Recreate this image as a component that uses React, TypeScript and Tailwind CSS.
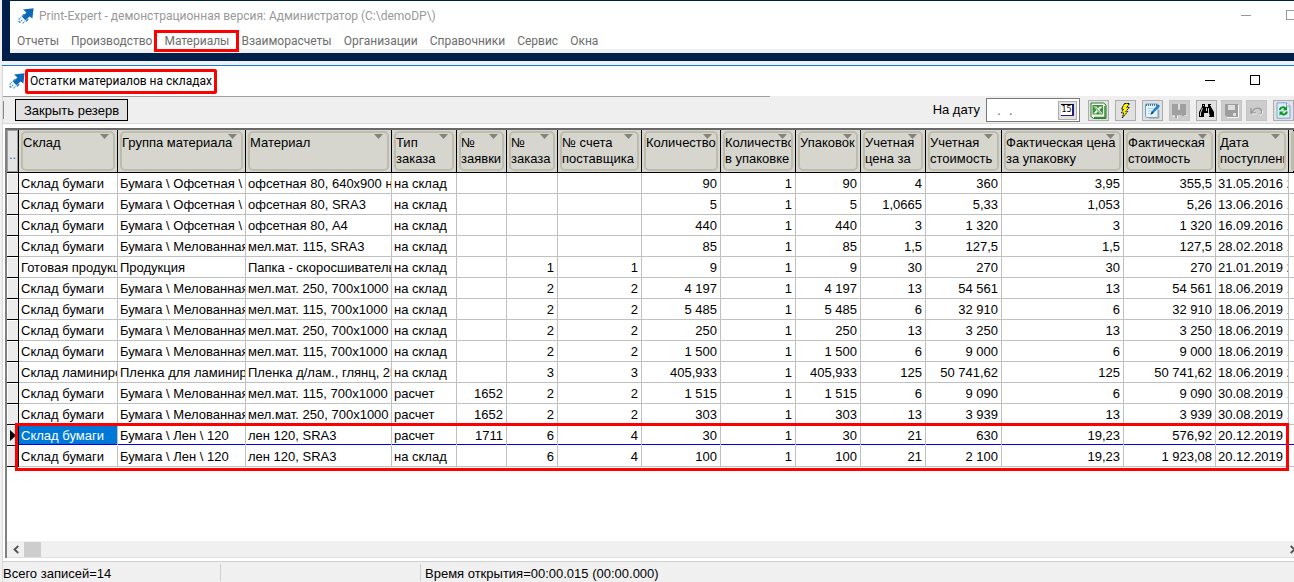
import type { ReactNode } from "react";

type Column = { title: string; second?: string; width: string; align: "left" | "right" };

const columns: Column[] = [
  { title: "Склад", width: "w-[99px]", align: "left" },
  { title: "Группа материала", width: "w-[128px]", align: "left" },
  { title: "Материал", width: "w-[146px]", align: "left" },
  { title: "Тип", second: "заказа", width: "w-[65px]", align: "left" },
  { title: "№", second: "заявки", width: "w-[50px]", align: "right" },
  { title: "№", second: "заказа", width: "w-[51px]", align: "right" },
  { title: "№ счета", second: "поставщика", width: "w-[84px]", align: "right" },
  { title: "Количество", width: "w-[79px]", align: "right" },
  { title: "Количество", second: "в упаковке", width: "w-[75px]", align: "right" },
  { title: "Упаковок", width: "w-[65px]", align: "right" },
  { title: "Учетная", second: "цена за", width: "w-[65px]", align: "right" },
  { title: "Учетная", second: "стоимость", width: "w-[76px]", align: "right" },
  { title: "Фактическая цена", second: "за упаковку", width: "w-[122px]", align: "right" },
  { title: "Фактическая", second: "стоимость", width: "w-[92px]", align: "right" },
  { title: "Дата", second: "поступления", width: "w-[73px]", align: "left" },
];

const rows: string[][] = [
  ["Склад бумаги", "Бумага \\ Офсетная \\", "офсетная 80, 640x900 на", "на склад", "", "", "", "90", "1", "90", "4", "360", "3,95", "355,5", "31.05.2016 2"],
  ["Склад бумаги", "Бумага \\ Офсетная \\", "офсетная 80, SRA3", "на склад", "", "", "", "5", "1", "5", "1,0665", "5,33", "1,053", "5,26", "13.06.2016 1"],
  ["Склад бумаги", "Бумага \\ Офсетная \\", "офсетная 80, A4", "на склад", "", "", "", "440", "1", "440", "3", "1 320", "3", "1 320", "16.09.2016 1"],
  ["Склад бумаги", "Бумага \\ Мелованная", "мел.мат. 115, SRA3", "на склад", "", "", "", "85", "1", "85", "1,5", "127,5", "1,5", "127,5", "28.02.2018 1"],
  ["Готовая продукция", "Продукция", "Папка - скоросшиватель", "на склад", "", "1", "1", "9", "1", "9", "30", "270", "30", "270", "21.01.2019 2"],
  ["Склад бумаги", "Бумага \\ Мелованная", "мел.мат. 250, 700x1000", "на склад", "", "2", "2", "4 197", "1", "4 197", "13", "54 561", "13", "54 561", "18.06.2019 1"],
  ["Склад бумаги", "Бумага \\ Мелованная", "мел.мат. 115, 700x1000", "на склад", "", "2", "2", "5 485", "1", "5 485", "6", "32 910", "6", "32 910", "18.06.2019 1"],
  ["Склад бумаги", "Бумага \\ Мелованная", "мел.мат. 250, 700x1000", "на склад", "", "2", "2", "250", "1", "250", "13", "3 250", "13", "3 250", "18.06.2019 1"],
  ["Склад бумаги", "Бумага \\ Мелованная", "мел.мат. 115, 700x1000", "на склад", "", "2", "2", "1 500", "1", "1 500", "6", "9 000", "6", "9 000", "18.06.2019 1"],
  ["Склад ламинирования", "Пленка для ламинирования", "Пленка д/лам., глянц, 25", "на склад", "", "3", "3", "405,933", "1", "405,933", "125", "50 741,62", "125", "50 741,62", "18.06.2019 2"],
  ["Склад бумаги", "Бумага \\ Мелованная", "мел.мат. 115, 700x1000", "расчет", "1652", "2", "2", "1 515", "1", "1 515", "6", "9 090", "6", "9 090", "30.08.2019 1"],
  ["Склад бумаги", "Бумага \\ Мелованная", "мел.мат. 250, 700x1000", "расчет", "1652", "2", "2", "303", "1", "303", "13", "3 939", "13", "3 939", "30.08.2019 1"],
  ["Склад бумаги", "Бумага \\ Лен \\ 120", "лен 120, SRA3", "расчет", "1711", "6", "4", "30", "1", "30", "21", "630", "19,23", "576,92", "20.12.2019"],
  ["Склад бумаги", "Бумага \\ Лен \\ 120", "лен 120, SRA3", "на склад", "", "6", "4", "100", "1", "100", "21", "2 100", "19,23", "1 923,08", "20.12.2019"],
];

const SELECTED = 12;

const menu = ["Отчеты", "Производство", "Материалы", "Взаиморасчеты", "Организации", "Справочники", "Сервис", "Окна"];

function RocketLogo() {
  return (
    <svg width="16" height="16" viewBox="0 0 16 16" className="shrink-0" aria-hidden="true">
      <path d="M5 1.5 15.6.2 14.4 10.6 11.6 8.4 7.4 12.2 4.2 9 8.4 4.6Z" fill="#0b69b7" />
      <path d="M3.4 8.2 6 5.6 7 6.8 4.4 9.3ZM7.4 12.8 10 10.3 10.6 11.8 8.2 14Z" fill="#2f80c4" />
      <path d="M.6 11.6 3 9.4M1.4 14.8 4.6 11.4M4.6 15.4 6.6 13.2M.4 14 2 12.4" stroke="#4d94cf" strokeWidth="1.3" strokeDasharray="1.6 .8" />
    </svg>
  );
}

function MinimizeGlyph() {
  return (
    <svg width="11" height="11" viewBox="0 0 11 11" aria-hidden="true">
      <path d="M0 5.500h10" stroke="currentColor" shapeRendering="crispEdges" />
    </svg>
  );
}

function MaximizeGlyph() {
  return (
    <svg width="11" height="11" viewBox="0 0 11 11" aria-hidden="true">
      <rect x=".5" y=".5" width="9" height="9" fill="none" stroke="currentColor" shapeRendering="crispEdges" />
    </svg>
  );
}

function ToolButton({ label, disabled, children }: { label: string; disabled?: boolean; children: ReactNode }) {
  return (
    <button
      type="button"
      aria-label={label}
      disabled={disabled}
      className="flex size-[21px] shrink-0 items-center justify-center border border-[#adadad] bg-[#e1e1e1] disabled:border-[#c4c4c4] disabled:bg-[#cccccc]"
    >
      <svg width="17" height="17" viewBox="0 0 17 17" aria-hidden="true">
        {children}
      </svg>
    </button>
  );
}

function Toolbar() {
  return (
    <div className="flex h-[27px] items-center border-b border-[#d9d9d9] bg-[#efefef]">
      <span className="h-[18px] w-px bg-[#8a8a8a]" />
      <button type="button" className="ml-[11px] h-[22px] shrink-0 border border-black bg-[#e1e1e1] px-2 pt-[2px] text-[13px] leading-4 text-black">
        Закрыть резерв
      </button>
      <div className="ml-auto flex items-center gap-2">
        <div className="flex items-center gap-[6px]">
          <label htmlFor="on-date" className="text-[13px] whitespace-nowrap text-black">
            На дату
          </label>
          <div className="flex h-6 w-[94px] items-center border border-[#7a7a7a] bg-white pr-[2px]">
            <input id="on-date" type="text" defaultValue=".  ." className="min-w-0 flex-1 bg-transparent pl-[10px] text-sm whitespace-pre text-[#4a7fa5] outline-none" />
            <button type="button" aria-label="Календарь" className="flex size-[19px] shrink-0 items-center justify-center border border-[#adadad] bg-[#e1e1e1]">
              <span className="flex h-3 w-[13px] items-center justify-center border-t border-r-2 border-b border-t-black border-r-[#20207a] border-b-[#20207a] bg-white font-['DejaVu_Sans'] text-[8px] leading-none text-black">
                15
              </span>
            </button>
          </div>
        </div>
        <div className="flex items-center gap-[6px]">
          <ToolButton label="Экспорт в Excel">
            <path d="M1 1h12.500L16 3v13.500H3.500L1 14.500Z" fill="#f3f9f1" stroke="#2d7a33" />
            <path d="M15 4v11.500H4" stroke="#3c8a3a" strokeWidth="1.500" fill="none" />
            <rect x="2.500" y="3" width="10.500" height="9.500" fill="#3f8f3f" />
            <path d="M3.500 4.500h3l1.500 2L9.700 4.500h2.800L9.400 8l3.300 3.500H9.600L7.900 9.300 6.200 11.500H3.300L6.500 8Z" fill="#e8f3e5" />
            <path d="M5 5.300 10.500 11" stroke="#2d7a33" strokeWidth=".8" />
          </ToolButton>
          <ToolButton label="Выполнить">
            <path d="M7.500 1.500h5L9.800 5.500h2.400L8.700 9.500h2L5.200 16l1.500-5H4.500l2-4h-2Z" fill="#fff200" stroke="#000" strokeWidth="1" strokeDasharray="2 .7" />
          </ToolButton>
          <ToolButton label="Изменить">
            <rect x="1.500" y="2" width="12.500" height="13.500" rx="1" fill="#e4f2fc" stroke="#6da3cc" />
            <path d="M2 3h12" stroke="#3c78a8" strokeWidth="2" strokeDasharray="1 1" />
            <path d="M4 6.500h7M4 9h5M4 11.500h3" stroke="#b9d5ea" />
            <path d="M14.800 8v8H5" stroke="#8f9aa3" fill="none" />
            <path d="m7 12 .8-2.600L14 2.500l2 1.500-6.500 7Z" fill="#1f78c4" />
            <path d="m6.500 13 1.300-3.600 1.700 1.600Z" fill="#333" />
          </ToolButton>
          <ToolButton label="Резерв" disabled>
            <path d="M1 2h6v6h2V2h6v11h-2v3h-2v-3H6v3H4v-3H1Z" fill="#a0a0a0" />
            <path d="M8 2v5M2 14.500h2M6.500 14v2.500M12 14v2.500M15.500 13v1" stroke="#f2f2f2" />
          </ToolButton>
          <div className="flex gap-1">
            <ToolButton label="Найти">
              <path d="M4 2h3v3h3V2h3v3l3 5v5h-5v-4H6v4H1v-5l3-5Z" fill="#000" />
              <path d="M4.500 6 2.500 11v3M10.500 6v5l1 3M8.500 6v3M5.500 3v1M12.500 3v1" stroke="#e8e8e8" strokeWidth=".9" fill="none" />
            </ToolButton>
            <ToolButton label="Сохранить" disabled>
              <path d="M2 2h13v13H4l-2-2Z" fill="#9d9d9d" />
              <path d="M5 3h7v5H5ZM10 11h3v3h-3Z" fill="#dedede" />
              <path d="M15.500 3v12.500H4" stroke="#f7f7f7" fill="none" />
            </ToolButton>
            <ToolButton label="Отменить" disabled>
              <path d="M3 6v5h5M3.500 10.500C6 6.500 9 5.500 11.500 6.500c2.500 1 3 4 1 5.500" stroke="#9b9b9b" strokeWidth="1.400" fill="none" />
              <path d="M4 12h4.500M12 13.500c2.500-1 3-3 2.500-5" stroke="#f2f2f2" fill="none" />
            </ToolButton>
          </div>
          <ToolButton label="Обновить">
            <path d="M2 .8h9.500L15 4v12.200H2Z" fill="#dcebfb" stroke="#7ca6d8" />
            <path d="M11.500.8V4H15" fill="#fff" stroke="#7ca6d8" />
            <path d="M5 8c0-3 4-3.500 5.500-1.600M11.700 9.500c0 3.300-4 3.800-5.700 1.700" stroke="#0a9a18" strokeWidth="2" fill="none" />
            <path d="M12 4v4.300H7.800ZM4.500 13.800V9.500h4.200Z" fill="#0a9a18" />
          </ToolButton>
        </div>
      </div>
    </div>
  );
}

function HeaderCell({ column }: { column?: Column }) {
  return (
    <th scope="col" className="h-[43px] border-r border-b border-black bg-[#d6d6ce] px-[2px] py-px text-left align-top font-normal">
      <div className="relative h-10 overflow-hidden rounded-[5px] border-2 border-[#bdbdae] pt-[2px] leading-4 whitespace-nowrap">
        {column && (
          <>
            <svg width="9" height="5" viewBox="0 0 9 5" className="absolute top-px right-1" aria-hidden="true">
              <path d="M0 0h9L4.500 5Z" fill="#84847c" />
            </svg>
            <span className="relative block">{column.title}</span>
            {column.second && <span className="relative block">{column.second}</span>}
          </>
        )}
      </div>
    </th>
  );
}

function StockTable() {
  return (
    <table className="w-full table-fixed border-separate border-spacing-0 text-[13px] text-black">
      <colgroup>
        <col className="w-3" />
        {columns.map((c, i) => (
          <col key={i} className={c.width} />
        ))}
        <col />
      </colgroup>
      <thead>
        <tr>
          <th aria-label="Маркер строки" className="border-r border-b border-black bg-[#e4e4e4] p-0 text-center font-normal text-[#3a6ea5]">
            <div className="h-[42px] overflow-hidden border border-[#a0a0a0] pt-4 leading-4">..</div>
          </th>
          {columns.map((c, i) => (
            <HeaderCell key={i} column={c} />
          ))}
          <HeaderCell />
        </tr>
      </thead>
      <tbody>
        {rows.map((row, r) => {
          const line = r === SELECTED ? "border-r-[#c0c0c0] border-b-white shadow-[inset_0_-1px_0_#0000ff]" : "border-r-[#c0c0c0] border-b-[#c0c0c0]";
          return (
            <tr key={r} aria-selected={r === SELECTED}>
              <td className="border-r border-b border-black bg-[#ececec] p-0">
                <div className="flex h-5 items-center border-t border-l border-white">
                  {r === SELECTED && (
                    <svg width="6" height="11" viewBox="0 0 6 11" className="ml-[2px]" aria-hidden="true">
                      <path d="M0 0 6 5.500 0 11Z" fill="#000" />
                    </svg>
                  )}
                </div>
              </td>
              {row.map((value, c) => (
                <td
                  key={c}
                  className={`h-[21px] overflow-hidden border-r border-b pt-[2px] pb-0 leading-[18px] whitespace-nowrap ${line} ${
                    columns[c].align === "right" ? "pr-[3px] pl-0 text-right" : "pr-0 pl-[2px]"
                  } ${r === SELECTED && c === 0 ? "bg-[#0078d7] text-white" : ""}`}
                >
                  {value}
                </td>
              ))}
              <td className={`border-b p-0 ${line}`} />
            </tr>
          );
        })}
      </tbody>
    </table>
  );
}

export default function App() {
  return (
    <div className="flex min-h-screen flex-col overflow-hidden bg-[#f0f0f0] pl-[2px] font-['Liberation_Sans',Arial,sans-serif] text-[13px] text-black">
      <div className="bg-[#00204a] pt-px pb-2 pl-2">
        <header className="border-b-4 border-[#f0f0f0] bg-white font-[Roboto,'Noto_Sans',sans-serif] text-xs">
          <div className="flex h-[30px] items-center overflow-hidden pl-2 text-[#999999]">
            <RocketLogo />
            <h1 className="ml-[5px] whitespace-nowrap">Print-Expert - демонстрационная версия: Администратор (C:\demoDP\)</h1>
            <div className="-mr-[3px] ml-auto flex gap-[34px] pb-[2px]">
              <button type="button" aria-label="Свернуть программу">
                <MinimizeGlyph />
              </button>
              <button type="button" aria-label="Развернуть программу">
                <MaximizeGlyph />
              </button>
            </div>
          </div>
          <nav className="flex h-[18px] items-center gap-3 pt-[2px] pl-[7px] text-[#6d6d6d]">
            {menu.map((item) => (
              <button key={item} type="button" className="relative leading-4 whitespace-nowrap">
                {item}
                {item === "Материалы" && <span className="absolute -inset-x-[10px] -inset-y-[3px] border-3 border-[#ff0000]" />}
              </button>
            ))}
          </nav>
        </header>
      </div>

      <div className="mt-1 h-px bg-[#1a7fd4]" />
      <main className="flex flex-1 flex-col border-l border-[#d9d9d9] bg-white">
        <div className="flex h-[30px] items-center pl-[6px] font-[Roboto,'Noto_Sans',sans-serif] text-xs">
          <RocketLogo />
          <h2 className="rounded-[2px] border-3 border-[#ff0000] px-[2px] leading-[19px] whitespace-nowrap">Остатки материалов на складах</h2>
          <div className="ml-auto flex gap-[34px] pr-[33px] pb-[2px]">
            <button type="button" aria-label="Свернуть окно">
              <MinimizeGlyph />
            </button>
            <button type="button" aria-label="Развернуть окно">
              <MaximizeGlyph />
            </button>
          </div>
        </div>
        <div className="h-px w-full bg-[#efefef]">
          <div className="h-px w-[59.4%] bg-[#a0a0a0]" />
        </div>
        <Toolbar />

        <section className="relative mt-1 ml-[2px] flex flex-1 flex-col border-t-2 border-l-2 border-t-[#696969] border-l-[#808080] bg-white">
          <StockTable />
          <div className="pointer-events-none absolute top-[293px] left-2 h-12 w-[1274px] border-3 border-[#ff0000]" />
          <div className="mt-auto flex h-[17px] items-center justify-between border-b border-[#e0e0e0] bg-[#f0f0f0] text-[#505050]">
            <div className="flex items-center">
              <button type="button" aria-label="Прокрутить влево" className="flex w-[17px] justify-center">
                <svg width="6" height="9" viewBox="0 0 6 9" aria-hidden="true">
                  <path d="M5.300 1 1.500 4.500 5.300 8" stroke="currentColor" strokeWidth="1.800" fill="none" />
                </svg>
              </button>
              <div className="h-[15px] w-[17px] bg-[#cdcdcd]" />
            </div>
            <button type="button" aria-label="Прокрутить вправо" className="-mr-[2px]">
              <svg width="6" height="9" viewBox="0 0 6 9" aria-hidden="true">
                <path d="M.7 1 4.500 4.500.7 8" stroke="currentColor" strokeWidth="1.800" fill="none" />
              </svg>
            </button>
          </div>
        </section>

        <footer className="mt-[3px] flex h-[21px] items-center border-t border-[#d0d0d0] bg-[#f0f0f0]">
          <span className="h-[17px] w-[218px] border-r border-[#d0d0d0] leading-[19px]">Всего записей=14</span>
          <span className="h-[17px] w-[200px] border-r border-[#d0d0d0]" />
          <span className="h-[17px] pl-1 leading-[19px]">Время открытия=00:00.015 (00:00.000)</span>
        </footer>
      </main>
    </div>
  );
}
